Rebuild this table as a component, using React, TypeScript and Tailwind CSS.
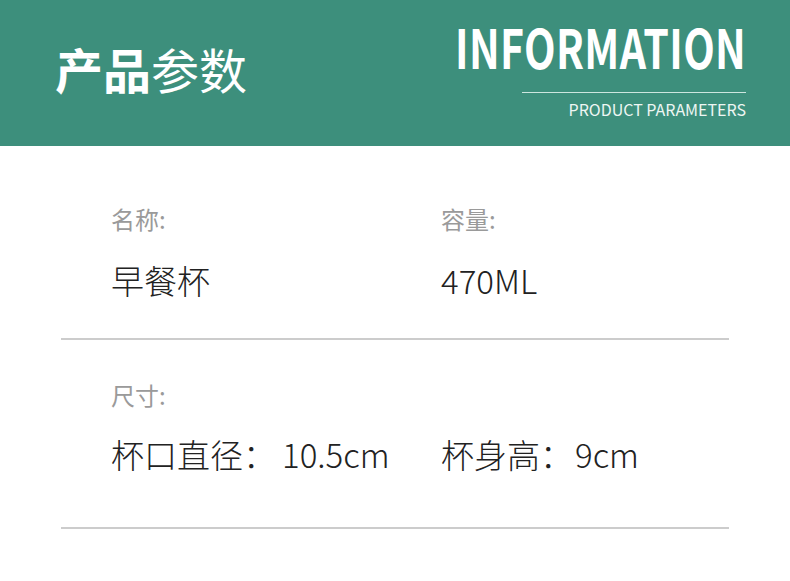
const FONT = "font-['Noto_Sans_CJK_SC','Noto_Sans',sans-serif]";

type Spec = { label: string; value: string };

const Cell = ({ label, value }: Spec) => (
	<div className="flex flex-col">
		<div className="h-[24px] text-[24px] leading-none text-[#9a9a9a]">{label}</div>
		<div className="mt-[33px] text-[33px] leading-none font-light text-[#222222] whitespace-nowrap">{value}</div>
	</div>
);

const App = () => {
	return (
		<div className={`w-[790px] h-[581px] bg-white overflow-hidden ${FONT}`}>
			<header className="flex h-[146px] items-start justify-between bg-[#3d8f7c]">
				<h1 className="mt-[44px] ml-[55px] text-[48px] leading-none text-white">
					<span className="font-bold">产品</span>
					<span className="font-normal">参数</span>
				</h1>
				<div className="mr-[44px] flex flex-col items-end">
					<div className="mt-[19px] origin-right scale-x-[0.76] text-[54px] leading-none font-semibold tracking-[0.5px] text-white">
						INFORMATION
					</div>
					<div className="mt-[19px] h-px w-[224px] bg-[#cde6df]" />
					<div className="mt-[8px] text-[16px] leading-none text-[#eef6f3]">PRODUCT PARAMETERS</div>
				</div>
			</header>

			<main className="px-[61px]">
				<section className="grid grid-cols-[330px_1fr] pt-[61px] pb-[41px] pl-[50px]">
					<Cell label="名称:" value="早餐杯" />
					<Cell label="容量:" value="470ML" />
				</section>
				<hr className="border-0 border-t-2 border-[#cccccc]" />
				<section className="grid grid-cols-[330px_1fr] pt-[43px] pb-[56px] pl-[50px]">
					<div className="flex flex-col">
						<div className="h-[24px] text-[24px] leading-none text-[#9a9a9a]">尺寸:</div>
						<div className="mt-[31px] text-[33px] leading-none font-light text-[#222222] whitespace-nowrap">
							杯口直径：<span className="ml-[6px]">10.5cm</span>
						</div>
					</div>
					<div className="flex flex-col">
						<div className="h-[24px]" />
						<div className="mt-[31px] text-[33px] leading-none font-light text-[#222222] whitespace-nowrap">
							杯身高：<span className="ml-[2px]">9cm</span>
						</div>
					</div>
				</section>
				<hr className="border-0 border-t-2 border-[#cccccc]" />
			</main>
		</div>
	);
};

export default App;
